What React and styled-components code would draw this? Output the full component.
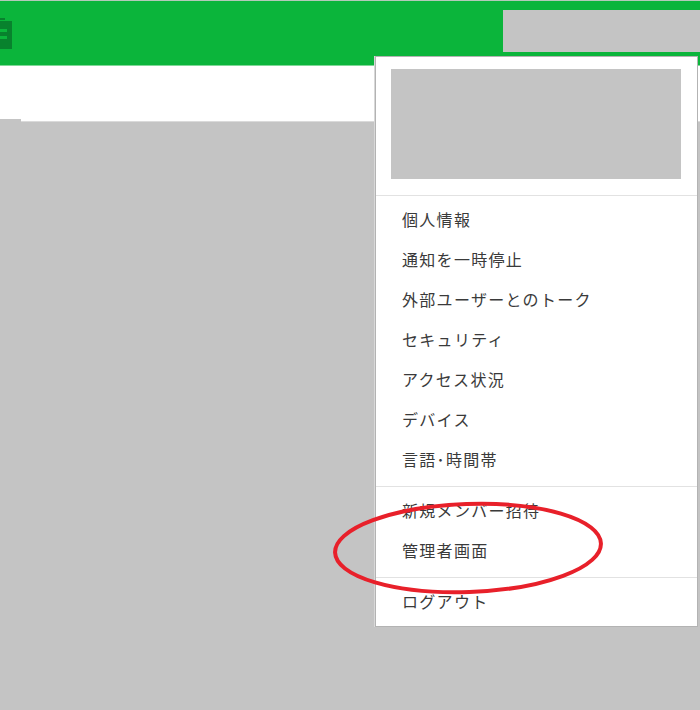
import React from "react";
import styled, { createGlobalStyle } from "styled-components";

const GlobalStyle = createGlobalStyle`
  html, body {
    margin: 0;
    padding: 0;
    background: #ffffff;
    font-family: "Noto Sans CJK JP", "Noto Sans", sans-serif;
  }
`;

const Page = styled.div`
  position: relative;
  width: 700px;
  height: 710px;
  overflow: hidden;
  display: flex;
  flex-direction: column;
`;

const Header = styled.header`
  height: 66px;
  flex: 0 0 66px;
  box-sizing: border-box;
  background: #0bb53b;
  border-top: 1px solid #b5c9b9;
  border-bottom: 1px solid #7fd897;
  display: flex;
  align-items: flex-start;
  justify-content: space-between;
`;

const Logo = styled.svg`
  display: block;
  margin-top: 17px;
`;

const AccountBox = styled.div`
  width: 197px;
  height: 42px;
  margin-top: 9px;
  background: #c4c4c4;
`;

const SubBar = styled.div`
  flex: 0 0 55px;
  background: #ffffff;
`;

const Content = styled.div`
  flex: 1;
  background: #c4c4c4;
  border-top: 1px solid #dadada;
  position: relative;
`;

const Tab = styled.div`
  position: absolute;
  left: 0;
  top: -3px;
  width: 21px;
  height: 3px;
  background: #c4c4c4;
`;

const Dropdown = styled.div`
  position: absolute;
  top: 56px;
  left: 375px;
  width: 323px;
  box-sizing: border-box;
  background: #ffffff;
  border: 1px solid #b3b3b3;
  box-shadow: -1px 0 0 #d8d8d8;
`;

const Profile = styled.div`
  padding: 12px 16px 16px 15px;
  border-bottom: 1px solid #e2e2e2;
`;

const ProfileBox = styled.div`
  width: 290px;
  height: 110px;
  background: #c4c4c4;
`;

const Section = styled.ul`
  list-style: none;
  margin: 0;
  padding: ${(p) => p.$pad || "5px 0"};
  border-bottom: ${(p) => (p.$last ? "none" : "1px solid #e2e2e2")};
`;

const Item = styled.li`
  height: 40px;
  line-height: 36px;
  padding-left: 26px;
  font-size: 16px;
  color: #3a3a3a;
  letter-spacing: 1.3px;
`;

const Circle = styled.svg`
  position: absolute;
  left: 0;
  top: 0;
  pointer-events: none;
`;

const groups = [
  ["個人情報", "通知を一時停止", "外部ユーザーとのトーク", "セキュリティ", "アクセス状況", "デバイス", "言語･時間帯"],
  ["新規メンバー招待", "管理者画面"],
  ["ログアウト"],
];

export default function App() {
  return (
    <>
      <GlobalStyle />
      <Page>
        <Header>
          <Logo width="14" height="32" viewBox="0 0 14 32">
            <path d="M0 2h5v-2h-5z M0 3h12v28h-12z" fill="#08822d" />
            <rect x="0" y="11" width="7" height="3" fill="#0bb53b" />
            <rect x="0" y="18" width="7" height="3" fill="#0bb53b" />
          </Logo>
          <AccountBox />
        </Header>
        <SubBar />
        <Content>
          <Tab />
        </Content>
        <Dropdown>
          <Profile>
            <ProfileBox />
          </Profile>
          {groups.map((g, i) => (
            <Section key={i} $last={i === groups.length - 1} $pad={i === groups.length - 1 ? "5px 0 3px" : "5px 0"}>
              {g.map((t) => (
                <Item key={t}>{t}</Item>
              ))}
            </Section>
          ))}
        </Dropdown>
        <Circle width="700" height="710">
          <ellipse
            cx="468"
            cy="548"
            rx="133"
            ry="44"
            fill="none"
            stroke="#e8202a"
            strokeWidth="4"
            transform="rotate(-2 468 548)"
          />
        </Circle>
      </Page>
    </>
  );
}
